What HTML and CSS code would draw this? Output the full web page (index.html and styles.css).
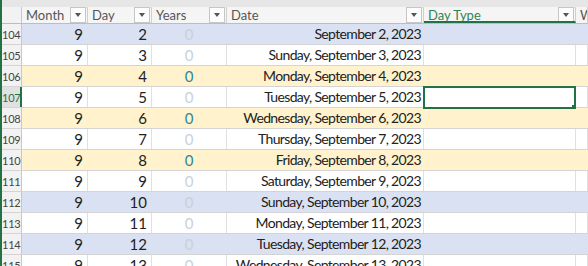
FILE: index.html
```html
<!DOCTYPE html>
<html lang="en">
<head>
  <meta charset="UTF-8">
  <title>Calendar table</title>
  <link rel="stylesheet" href="styles.css">
</head>
<body>
  <div class="sheet">
    <div class="row head">
      <div class="rh corner"></div>
      <div class="hc">Month<span class="dd"></span></div>
      <div class="hc">Day<span class="dd"></span></div>
      <div class="hc">Years<span class="dd"></span></div>
      <div class="hc">Date<span class="dd"></span></div>
      <div class="hc active">Day Type<span class="dd"></span></div>
      <div class="hc">W</div>
    </div>

    <div class="row blue">
      <div class="rh">104</div><div class="c num">9</div><div class="c num">2</div><div class="c yr">0</div><div class="c date">September 2, 2023</div><div class="c"></div><div class="c"></div>
    </div>
    <div class="row">
      <div class="rh">105</div><div class="c num">9</div><div class="c num">3</div><div class="c yr">0</div><div class="c date">Sunday, September 3, 2023</div><div class="c"></div><div class="c"></div>
    </div>
    <div class="row yellow">
      <div class="rh">106</div><div class="c num">9</div><div class="c num">4</div><div class="c yr on">0</div><div class="c date">Monday, September 4, 2023</div><div class="c"></div><div class="c"></div>
    </div>
    <div class="row sel">
      <div class="rh">107</div><div class="c num">9</div><div class="c num">5</div><div class="c yr">0</div><div class="c date">Tuesday, September 5, 2023</div><div class="c cursor"><span class="handle"></span></div><div class="c"></div>
    </div>
    <div class="row yellow">
      <div class="rh">108</div><div class="c num">9</div><div class="c num">6</div><div class="c yr on">0</div><div class="c date">Wednesday, September 6, 2023</div><div class="c"></div><div class="c"></div>
    </div>
    <div class="row">
      <div class="rh">109</div><div class="c num">9</div><div class="c num">7</div><div class="c yr">0</div><div class="c date">Thursday, September 7, 2023</div><div class="c"></div><div class="c"></div>
    </div>
    <div class="row yellow">
      <div class="rh">110</div><div class="c num">9</div><div class="c num">8</div><div class="c yr on">0</div><div class="c date">Friday, September 8, 2023</div><div class="c"></div><div class="c"></div>
    </div>
    <div class="row">
      <div class="rh">111</div><div class="c num">9</div><div class="c num">9</div><div class="c yr">0</div><div class="c date">Saturday, September 9, 2023</div><div class="c"></div><div class="c"></div>
    </div>
    <div class="row blue">
      <div class="rh">112</div><div class="c num">9</div><div class="c num">10</div><div class="c yr">0</div><div class="c date">Sunday, September 10, 2023</div><div class="c"></div><div class="c"></div>
    </div>
    <div class="row">
      <div class="rh">113</div><div class="c num">9</div><div class="c num">11</div><div class="c yr">0</div><div class="c date">Monday, September 11, 2023</div><div class="c"></div><div class="c"></div>
    </div>
    <div class="row blue">
      <div class="rh">114</div><div class="c num">9</div><div class="c num">12</div><div class="c yr">0</div><div class="c date">Tuesday, September 12, 2023</div><div class="c"></div><div class="c"></div>
    </div>
    <div class="row">
      <div class="rh">115</div><div class="c num">9</div><div class="c num">13</div><div class="c yr">0</div><div class="c date">Wednesday, September 13, 2023</div><div class="c"></div><div class="c"></div>
    </div>
  </div>
</body>
</html>
```

FILE: styles.css
```css
/* spreadsheet table view */
body {
  margin: 0;
  background: #fff;
  font-family: Lato, "Liberation Sans", sans-serif;
  overflow: hidden;
}
.sheet {
  width: 588px;
  height: 266px;
  border-left: 2px solid #217346;
  box-sizing: border-box;
  overflow: hidden;
}
.row {
  display: grid;
  grid-template-columns: 20px 66px 64px 75px 197px 152px 12px;
  height: 21px;
  border-bottom: 1px solid #d4d4d4;
  box-sizing: border-box;
}
.row.blue { background: #d9e1f2; }
.row.yellow { background: #fff2cc; }

.rh {
  background: #f2f2f2;
  color: #444;
  font-size: 11px;
  letter-spacing: -0.2px;
  line-height: 22px;
  text-align: left;
  padding-left: 0;
  border-right: 1px solid #c8c8c8;
  white-space: nowrap;
  overflow: hidden;
}
.row.sel .rh {
  color: #217346;
  background: #e1e1e1;
  border-right: 2px solid #217346;
}
.c {
  font-size: 14px;
  letter-spacing: -0.65px;
  line-height: 20px;
  color: #222;
  border-right: 1px solid #e0e0e0;
  white-space: nowrap;
  overflow: hidden;
}
.row.blue .c, .row.yellow .c { border-right-color: transparent; }
.num { text-align: right; padding-right: 4px; font-size: 15px; letter-spacing: 0; }
.yr { text-align: center; color: #c9d1da; font-size: 15px; letter-spacing: 0; }
.yr.on { color: #2b8a9e; }
.date { text-align: right; padding-right: 2px; }

.cursor {
  position: relative;
  border: 2px solid #217346;
  margin: -1px 0 -2px -1px;
  background: #fff;
  z-index: 1;
}
.handle {
  position: absolute;
  right: -4px;
  bottom: -4px;
  width: 5px;
  height: 5px;
  background: #217346;
  border: 1px solid #fff;
}

/* header row */
.head {
  height: 24px;
  background: #f5f5f5;
  border-top: 7px solid #e6e6e6;
  border-bottom: 1px solid #bdbdbd;
}
.corner { background: #f2f2f2; }
.hc {
  position: relative;
  font-size: 13px;
  color: #555;
  line-height: 16px;
  padding-left: 4px;
  border-right: 1px solid #d0d0d0;
  white-space: nowrap;
  overflow: hidden;
}
.hc.active {
  color: #2f8552;
  border-bottom: 2px solid #217346;
}
.dd {
  position: absolute;
  right: 1px;
  top: 0;
  width: 14px;
  height: 14px;
  border: 1px solid #c6c6c6;
  background: #fdfdfd;
}
.dd::after {
  content: "";
  position: absolute;
  left: 4px;
  top: 5px;
  border-left: 3px solid transparent;
  border-right: 3px solid transparent;
  border-top: 4px solid #555;
}
```
